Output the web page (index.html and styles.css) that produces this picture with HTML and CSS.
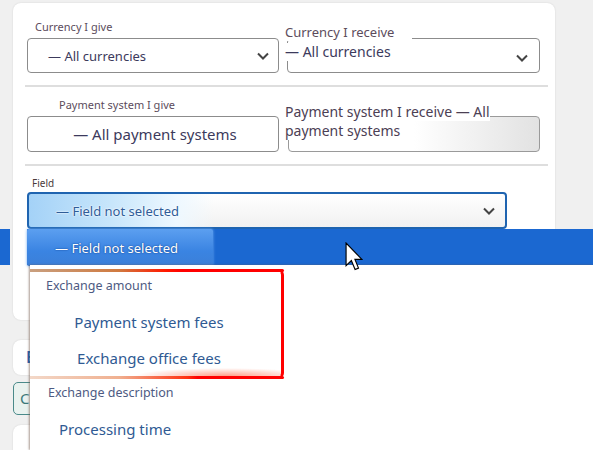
FILE: index.html
```html
<!DOCTYPE html>
<html>
<head>
<meta charset="utf-8">
<link rel="stylesheet" href="styles.css">
</head>
<body>
<div class="page">
  <section class="card filters">
    <div class="row">
      <div class="field">
        <div class="lbl">Currency I give</div>
        <div class="select">
          <span class="val">— All currencies</span>
          <svg class="chev" viewBox="0 0 12 8" width="12" height="8"><path d="M1 1.5 L6 6.5 L11 1.5"/></svg>
        </div>
      </div>
      <div class="field stack">
        <div class="select sel-r1">
          <span class="val">— All currencies</span>
          <svg class="chev" viewBox="0 0 12 8" width="12" height="8"><path d="M1 1.5 L6 6.5 L11 1.5"/></svg>
        </div>
        <div class="lbl-over"><span>Currency I receive</span></div>
      </div>
    </div>
    <div class="divider"></div>
    <div class="row">
      <div class="field">
        <div class="lbl lbl-ps">Payment system I give</div>
        <div class="select sel-center"><span class="val">— All payment systems</span></div>
      </div>
      <div class="field stack">
        <div class="select sel-grad"></div>
        <div class="txt-over"><span>Payment system I receive — All payment systems</span></div>
      </div>
    </div>
    <div class="divider"></div>
    <div class="field field-wide">
      <div class="lbl lbl-field">Field</div>
      <div class="select sel-focus">
        <span class="val">— Field not selected</span>
        <svg class="chev" viewBox="0 0 12 8" width="12" height="8"><path d="M1 1.5 L6 6.5 L11 1.5"/></svg>
      </div>
    </div>
  </section>
  <section class="card mini"><h3 class="mini-title">E</h3></section>
  <div class="btn">C</div>
  <section class="card tail"></section>
</div>

<div class="stub"></div>
<div class="dropdown">
  <div class="opt active"><div class="glow">— Field not selected</div></div>
  <div class="list">
    <div class="mark">
      <div class="grp">Exchange amount</div>
      <div class="opt opt-c">Payment system fees</div>
      <div class="opt opt-c">Exchange office fees</div>
    </div>
    <div class="grp grp2">Exchange description</div>
    <div class="opt opt-p">Processing time</div>
  </div>
</div>
<svg class="cursor" viewBox="0 0 12.5 21" width="18" height="30"><path d="M0.7 0.7 L0.7 16.5 L4.4 13 L7 19.3 L9.4 18.3 L6.9 12.2 L11.8 12.2 Z"/></svg>
</body>
</html>
```

FILE: styles.css
```css
* { box-sizing: border-box; margin: 0; padding: 0; }
html, body { width: 593px; height: 450px; overflow: hidden; }
body {
  background: #f0f0f0;
  font-family: "Noto Sans", "Open Sans", sans-serif;
  position: relative;
}
.page { padding-left: 13px; }
.card {
  width: 542px;
  background: #fff;
  border-radius: 8px;
  box-shadow: 0 0 2px rgba(0, 0, 0, 0.12);
}
.filters { margin-top: 3px; padding: 17px 15px 91px 14px; }
.row { display: grid; grid-template-columns: 252px 253px; column-gap: 8px; }
.field { display: flex; flex-direction: column; }
.stack { display: grid; }
.stack > * { grid-area: 1 / 1; }
.lbl {
  font-size: 11px;
  line-height: 14px;
  color: #5c4c5c;
  margin-bottom: 4px;
  padding-left: 8px;
}
.lbl-ps { padding-left: 32px; }
.lbl-field { font-size: 10px; line-height: 13px; margin-bottom: 2px; padding-left: 5px; color: #4a3a3a; }
.select {
  height: 35px;
  border: 1px solid #8c8c8c;
  border-radius: 4px;
  display: flex;
  align-items: center;
  justify-content: space-between;
  padding: 0 9px 0 20px;
  color: #3c3a5c;
  font-size: 13px;
  background: #fff;
}
.chev { fill: none; stroke: #444; stroke-width: 2; }
.sel-r1 {
  margin-top: 18px;
  align-items: flex-start;
  padding: 4px 11px 0 0;
  font-size: 14px;
}
.sel-r1 .val { margin-left: -3px; background: #fff; line-height: 18px; }
.sel-r1 .chev { margin-top: 11px; }
.lbl-over {
  margin-top: 4px;
  margin-left: -2px;
  align-self: start;
  font-size: 13px;
  line-height: 16px;
  color: #5c4c5c;
}
.lbl-over span { background: #fff; padding-right: 18px; }
.sel-center { justify-content: center; padding: 0 0 0 4px; font-size: 15px; height: 36px; }
.sel-grad {
  margin-top: 18px;
  margin-left: 1px;
  height: 36px;
  background: linear-gradient(to right, #fff 50%, #e2e2e2 100%);
  border-color: #9a9a9a;
}
.txt-over {
  margin-top: 4px;
  margin-left: -2px;
  align-self: start;
  width: 230px;
  font-size: 14px;
  line-height: 19px;
  color: #4c4054;
}
.txt-over span { background: #fff; }
.divider {
  height: 2px;
  background: #dedede;
  margin: 12px -8px 11px -2px;
}
.divider + .field-wide { margin-top: 1px; }
.field-wide { width: 480px; }
.sel-focus {
  height: 37px;
  border: 2px solid #1f64b0;
  padding: 0 10px 0 27px;
  color: #2f5c98;
  background:
    linear-gradient(to right, #a4d2f7 0%, #c8e6fb 45%, #eef8ff 80%, rgba(255,255,255,0) 100%) left top / 185px 100% no-repeat,
    linear-gradient(#fff, #f1f1f1);
}
.sel-focus .val { text-shadow: 0 0 2px #fff, 0 0 2px #fff; }
.mini { margin-top: 20px; height: 35px; padding: 8px 13px; overflow: hidden; }
.mini-title { font-size: 16px; line-height: 19px; color: #1a5fb4; font-weight: 600; }
.btn {
  margin-top: 7px;
  width: 60px;
  height: 33px;
  padding: 0 6px;
  border: 1px solid #4a8a8a;
  border-radius: 5px;
  background: #e9f2ef;
  color: #3d7a7a;
  font-size: 15px;
  line-height: 31px;
}
.tail { margin-top: 10px; height: 60px; }

.stub { position: absolute; left: 0; top: 229px; width: 10px; height: 36px; background: #1b68d1; }
.dropdown {
  position: absolute;
  left: 27px;
  top: 229px;
  right: 0;
  bottom: 0;
  font-family: "Noto Sans", "Open Sans", sans-serif;
}
.opt.active {
  height: 36px;
  background: #1b68d1;
}
.glow {
  width: 186px;
  height: 37px;
  padding-left: 28px;
  line-height: 38px;
  font-size: 13px;
  color: #fff;
  background: linear-gradient(#5c9ff0, #3a84e2 60%, #3b7fd8);
  box-shadow: 0 0 3px #6aa8f0;
  text-shadow: 0 0 1px #1a4fa0, 0 0 2px #1a4fa0;
  border-radius: 2px;
}
.list {
  margin-left: 3px;
  height: 185px;
  background: #fff;
  box-shadow: -1px 0 2px rgba(110, 85, 70, 0.6);
  padding-top: 4px;
  color: #2f5a93;
}
.mark {
  width: 254px;
  border: 3px solid red;
  border-left: 0;
  border-radius: 0 6px 6px 0;
  background:
    radial-gradient(ellipse 90px 8px at 195px 100%, rgba(255, 80, 40, 0.55), rgba(255, 80, 40, 0) 100%) no-repeat;
  border-top-color: transparent;
  border-bottom-color: transparent;
  position: relative;
}
.mark::before, .mark::after {
  content: "";
  position: absolute;
  left: 0;
  right: -3px;
  height: 3px;
  border-radius: 0 3px 3px 0;
}
.mark::before { top: -3px; background: linear-gradient(to right, #c9a080 0%, #d07a40 35%, #ff1a00 53%, red 60%); }
.mark::after { bottom: -3px; background: linear-gradient(to right, #f3d8c8 0%, #f0b090 35%, #ff3010 62%, red 66%); }
.grp {
  height: 32px;
  line-height: 28px;
  padding-left: 16px;
  font-size: 12.5px;
  color: #4d5a82;
}
.opt-c {
  height: 36px;
  line-height: 36px;
  text-align: center;
  width: 248px;
  font-size: 15px;
  margin-left: -5px;
}
.grp2 { padding-left: 18px; }
.opt-p { height: 36px; line-height: 36px; padding-left: 29px; font-size: 15px; }
.cursor {
  position: absolute;
  left: 345px;
  top: 242px;
  fill: #fff;
  stroke: #000;
  stroke-width: 0.8;
  stroke-linejoin: miter;
}
```
